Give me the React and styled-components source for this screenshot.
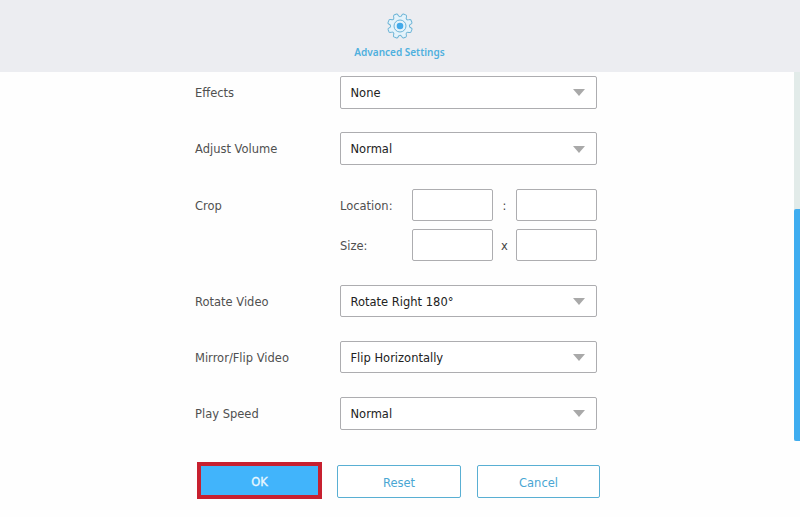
import React from 'react'
import styled, { createGlobalStyle } from 'styled-components'


const GlobalStyle = createGlobalStyle`
    * {
        box-sizing: border-box;
    }

    body {
        margin: 0;
        background-color: #fefefe;
        font-family: 'DejaVu Sans', Verdana, sans-serif;
        font-size: 11.5px;
        overflow: hidden;
    }
`

const Page = styled.div`
    display: flex;
    flex-direction: column;
    height: 517px;
`

const Header = styled.header`
    display: flex;
    flex-direction: column;
    align-items: center;
    flex: none;
    height: 72px;
    padding: 12px 1px 0 0;
    background-color: #ecedf1;
`

const Title = styled.h1`
    margin: 5px 0 0;
    color: #4fb0de;
    font-family: 'Noto Sans', sans-serif;
    font-size: 10px;
    font-weight: 600;
    line-height: 14px;
`

const Body = styled.div`
    display: flex;
    flex: 1;
    justify-content: space-between;
`

const Main = styled.main`
    padding: 4.3px 0 0 195px;
`

const Row = styled.div`
    display: flex;
    height: ${({ $tall }) => $tall ? 73.3 : 33}px;
    margin-bottom: 23.15px;
`

const Label = styled.div`
    width: ${({ $width }) => $width || 145}px;
    color: #505050;
    line-height: 34px;
`

const Select = styled.button`
    display: flex;
    align-items: center;
    justify-content: space-between;
    width: 257px;
    height: 32.3px;
    padding: 1px 11px 0 9.5px;
    border: 1px solid #adadb0;
    border-radius: 2px;
    background-color: #fff;
    color: #222;
    font: inherit;
`

const Arrow = styled.span`
    border: 6px solid transparent;
    border-top: 7px solid #a9a9a9;
    border-bottom: 0;
`

const CropFields = styled.div`
    display: flex;
    flex-direction: column;
    gap: 7.3px;
`

const CropLine = styled.div`
    display: flex;
    height: 33px;
`

const Input = styled.input`
    width: 81px;
    height: 32.3px;
    border: 1px solid #adadb0;
    border-radius: 2px;
    background-color: #fff;
`

const Separator = styled.span`
    width: 23px;
    color: #444;
    line-height: 34px;
    text-align: center;
`

const Actions = styled.div`
    display: flex;
    align-items: flex-start;
    gap: 16px;
    padding: 9px 0 0 2px;
`

const Button = styled.button`
    width: ${({ $width }) => $width || 124}px;
    height: 33px;
    margin-top: 3px;
    padding: 2px 0 0;
    border: 1px solid #59afd3;
    border-radius: 2px;
    background-color: #fff;
    color: #4aa6d3;
    font: inherit;
`

const PrimaryButton = styled(Button)`
    width: 125px;
    height: 37px;
    margin: 0 -1px 0 0;
    border: 4px solid #c7202f;
    border-radius: 0;
    background-color: #41b4fb;
    color: #e9f8ff;
    -webkit-text-stroke: 0.3px #e9f8ff;
`

const Scrollbar = styled.div`
    width: 6px;
    height: 369px;
    padding-top: 137px;
    background-color: #e2ebe9;
`

const Thumb = styled.div`
    height: 232px;
    border-radius: 2px 0 0 2px;
    background-color: #3fadf0;
`

const GearIcon = () => (
    <svg width='28' height='28' viewBox='0 0 28 28' fill='none' stroke='#6db4d6' strokeWidth='1'>
        <path
            fill='#e4f3fb'
            strokeLinejoin='round'
            transform='rotate(22.5 14 14)'
            d='M11.2 4.7 C11.7 3.5 11.2 1.6 12.5 1.6 H15.5 C16.8 1.6 16.3 3.5 16.8 4.7 C17.5 5.5 18.3 5.7 19 5.3 C20.1 4.7 20.9 3.5 21.8 4.3 L23.7 6.2 C24.5 7.1 23.3 7.9 22.7 9 C22.3 9.7 22.5 10.5 23.3 11.2 C24.5 11.7 26.4 11.2 26.4 12.5 V15.5 C26.4 16.8 24.5 16.3 23.3 16.8 C22.5 17.5 22.3 18.3 22.7 19 C23.3 20.1 24.5 20.9 23.7 21.8 L21.8 23.7 C20.9 24.5 20.1 23.3 19 22.7 C18.3 22.3 17.5 22.5 16.8 23.3 C16.3 24.5 16.8 26.4 15.5 26.4 H12.5 C11.2 26.4 11.7 24.5 11.2 23.3 C10.5 22.5 9.7 22.3 9 22.7 C7.9 23.3 7.1 24.5 6.2 23.7 L4.3 21.8 C3.5 20.9 4.7 20.1 5.3 19 C5.7 18.3 5.5 17.5 4.7 16.8 C3.5 16.3 1.6 16.8 1.6 15.5 V12.5 C1.6 11.2 3.5 11.7 4.7 11.2 C5.5 10.5 5.7 9.7 5.3 9 C4.7 7.9 3.5 7.1 4.3 6.2 L6.2 4.3 C7.1 3.5 7.9 4.7 9 5.3 C9.7 5.7 10.5 5.5 11.2 4.7 Z'
        />
        <circle cx='14' cy='14' r='6' />
        <circle cx='14' cy='14' r='3.3' fill='#42aaea' stroke='none' />
    </svg>
)

const SelectRow = ({ label, value }) => (
    <Row>
        <Label>{label}</Label>
        <Select>
            {value}
            <Arrow />
        </Select>
    </Row>
)

const CropField = ({ label, separator }) => (
    <CropLine>
        <Label $width={72}>{label}</Label>
        <Input />
        <Separator>{separator}</Separator>
        <Input />
    </CropLine>
)

export default function App() {
    return (
        <Page>
            <GlobalStyle />
            <Header>
                <GearIcon />
                <Title>Advanced Settings</Title>
            </Header>
            <Body>
                <Main>
                    <SelectRow label='Effects' value='None' />
                    <SelectRow label='Adjust Volume' value='Normal' />
                    <Row $tall>
                        <Label>Crop</Label>
                        <CropFields>
                            <CropField label='Location:' separator=':' />
                            <CropField label='Size:' separator='x' />
                        </CropFields>
                    </Row>
                    <SelectRow label='Rotate Video' value='Rotate Right 180°' />
                    <SelectRow label='Mirror/Flip Video' value='Flip Horizontally' />
                    <SelectRow label='Play Speed' value='Normal' />
                    <Actions>
                        <PrimaryButton>OK</PrimaryButton>
                        <Button>Reset</Button>
                        <Button $width={123}>Cancel</Button>
                    </Actions>
                </Main>
                <Scrollbar>
                    <Thumb />
                </Scrollbar>
            </Body>
        </Page>
    )
}
